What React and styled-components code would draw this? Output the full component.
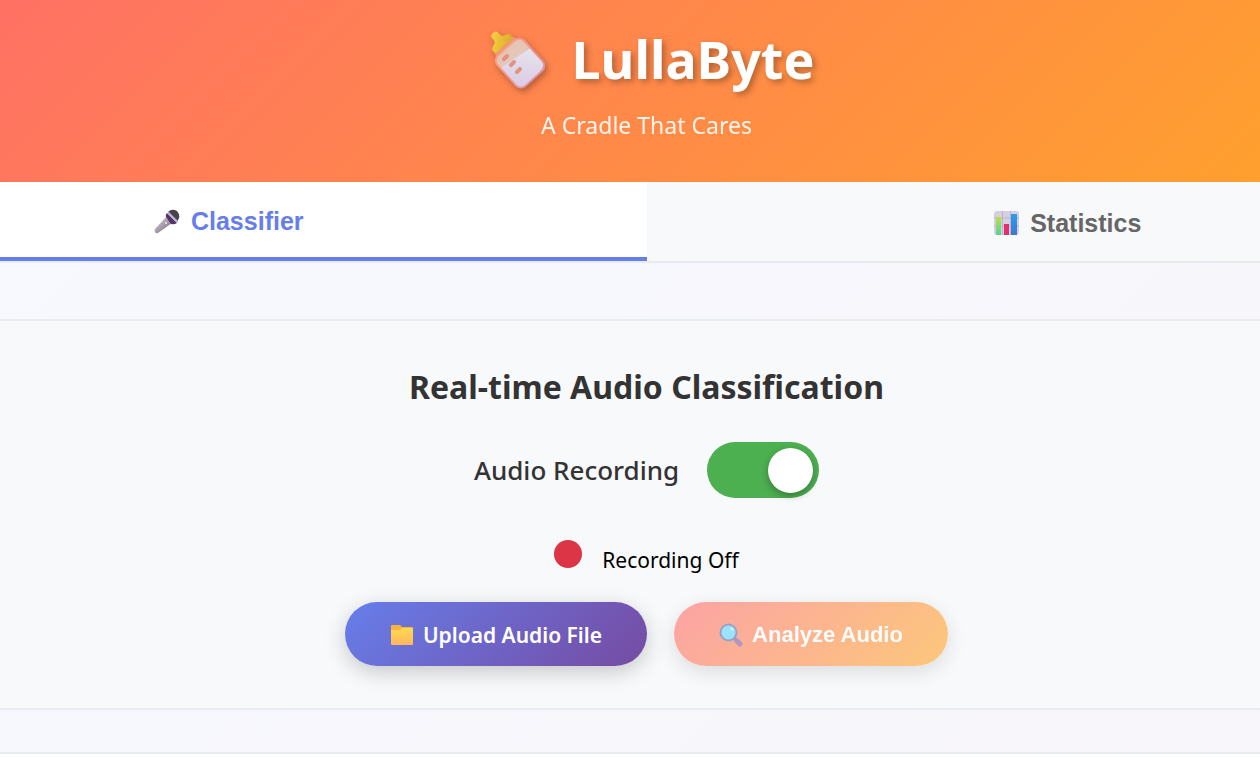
import React, { useState } from "react";
import styled, { createGlobalStyle } from "styled-components";

const GlobalStyle = createGlobalStyle`
  * { box-sizing: border-box; }
  body {
    margin: 0;
    background: #fff;
    color: #000;
    font-family: "Noto Sans", "Open Sans", sans-serif;
  }
`;

const Viewport = styled.div`
  overflow: hidden;
`;

const Page = styled.div`
  margin: 0 -225px 0 -192px;
`;

const Header = styled.header`
  display: flex;
  flex-direction: column;
  align-items: center;
  gap: 10px;
  padding: 23px 0 37px;
  color: #fff;
  background: linear-gradient(135deg, #ff6b6b 0%, #ffa726 100%);
`;

const Brand = styled.h1`
  display: flex;
  align-items: center;
  gap: 27px;
  margin: 0;
  padding-left: 8px;
  font-size: 52px;
  font-weight: 700;
  line-height: 72px;
  text-shadow: 3px 3px 6px rgba(0, 0, 0, 0.3);
`;

const BottleSvg = styled.svg`
  width: 58px;
  height: 60px;
  filter: drop-shadow(2px 3px 3px rgba(0, 0, 0, 0.3));
`;

const Tagline = styled.p`
  margin: 0;
  font-size: 23px;
  line-height: 40px;
  opacity: 0.9;
`;

const Tabs = styled.nav`
  display: flex;
  height: 81px;
  border-bottom: 2px solid #e9ecef;
  background: #f8f9fa;
`;

const Tab = styled.button`
  flex: 1;
  display: flex;
  align-items: center;
  justify-content: center;
  gap: 11px;
  padding: 2px 0 0 3px;
  border: 0;
  border-bottom: ${(p) => (p.$active ? "4px solid #667eea" : "0")};
  background: ${(p) => (p.$active ? "#fff" : "#f8f9fb")};
  color: ${(p) => (p.$active ? "#667eea" : "#666")};
  font: 700 25px/32px "Liberation Sans", sans-serif;
  cursor: pointer;
`;

const Icon = styled.svg`
  flex: none;
  width: ${(p) => p.$size}px;
  height: ${(p) => p.$size}px;
`;

const Content = styled.main`
  padding: 56px 0 42px;
  border-bottom: 2px solid #e9ecef;
  background: linear-gradient(135deg, #f6f9ff 0%, #f8f5fa 100%);
`;

const Panel = styled.section`
  display: flex;
  flex-direction: column;
  align-items: center;
  padding: 42px 0;
  border: solid #e9ecef;
  border-width: 2px 0;
  background: #f8f9fb;
`;

const Title = styled.h2`
  margin: 0 0 31px;
  color: #333;
  font-size: 32px;
  font-weight: 700;
  line-height: 48px;
`;

const ToggleRow = styled.label`
  display: flex;
  align-items: center;
  gap: 28px;
  height: 56px;
  color: #333;
  font-size: 26px;
  font-weight: 500;
  cursor: pointer;
`;

const Switch = styled.input`
  appearance: none;
  display: flex;
  align-items: center;
  justify-content: ${(p) => (p.checked ? "flex-end" : "flex-start")};
  width: 112px;
  height: 56px;
  margin: 0;
  padding: 0 6px;
  border-radius: 28px;
  background: ${(p) => (p.checked ? "#4caf50" : "#ccc")};
  cursor: pointer;

  &::before {
    content: "";
    width: 45px;
    height: 45px;
    border-radius: 50%;
    background: #fff;
    box-shadow: 0 3px 7px rgba(0, 0, 0, 0.3);
  }
`;

const Status = styled.div`
  display: flex;
  align-items: flex-start;
  gap: 20px;
  margin: 42px 0 0;
  height: 62px;
  font-size: 21px;
  line-height: 40px;
`;

const Dot = styled.span`
  width: 28px;
  height: 28px;
  border-radius: 50%;
  background: #dc3545;
`;

const Actions = styled.div`
  display: flex;
  gap: 27px;
`;

const Action = styled.button`
  display: flex;
  align-items: center;
  justify-content: center;
  gap: 9px;
  width: ${(p) => p.$width}px;
  height: 64px;
  padding: 2px 0 0;
  border: 0;
  border-radius: 32px;
  color: #fff;
  background: ${(p) => p.$fill};
  font: ${(p) => p.$font};
  box-shadow: 0 6px 21px rgba(0, 0, 0, 0.2);
  opacity: ${(p) => (p.$dim ? 0.6 : 1)};
  cursor: pointer;
`;

function Bottle() {
  return (
    <BottleSvg viewBox="1 0 58 60" aria-hidden="true">
      <defs>
        <linearGradient id="glass" x1="0" y1="0" x2="0" y2="1">
          <stop offset="0" stopColor="#e6c4b4" />
          <stop offset="1" stopColor="#dfcac8" />
        </linearGradient>
        <linearGradient id="milk" x1="0.6" y1="0" x2="0.4" y2="1">
          <stop offset="0" stopColor="#e6e4ea" />
          <stop offset="1" stopColor="#d9c8e6" />
        </linearGradient>
        <linearGradient id="rim" x1="0.3" y1="0" x2="0.6" y2="1">
          <stop offset="0" stopColor="#f7a17f" />
          <stop offset="1" stopColor="#de91a8" />
        </linearGradient>
        <linearGradient id="teat" x1="0" y1="0" x2="1" y2="1">
          <stop offset="0" stopColor="#ffd94a" />
          <stop offset="1" stopColor="#d9ab28" />
        </linearGradient>
        <clipPath id="body">
          <rect x="-17" y="-18" width="34" height="39" rx="6" transform="translate(33 33) rotate(-42)" />
        </clipPath>
      </defs>
      <g transform="translate(33 33) rotate(-42)">
        <rect x="-13" y="-24" width="26" height="8" rx="3" fill="#ee9670" />
        <path d="M-11-22q-3-5 2-7 5-1 5-5-1-5 4-5t4 5q0 4 5 5 5 2 2 7z" fill="url(#teat)" />
        <rect x="-19" y="-20" width="38" height="43" rx="8" fill="url(#rim)" />
        <rect x="-17" y="-18" width="34" height="39" rx="6" fill="url(#glass)" />
      </g>
      <path clipPath="url(#body)" d="M8 43L46 18L62 30L40 62L14 54z" fill="url(#milk)" />
      <g stroke="#e2927f" strokeWidth="4" strokeLinecap="round">
        <path d="M18 30l3-3M25 36l3-3M31 43l3-3" />
      </g>
    </BottleSvg>
  );
}

function Microphone() {
  return (
    <Icon $size={26} viewBox="0 0 26 26" aria-hidden="true">
      <defs>
        <linearGradient id="handle" x1="0" y1="0" x2="1" y2="1">
          <stop offset="0.2" stopColor="#c9c3cd" />
          <stop offset="0.8" stopColor="#80778a" />
        </linearGradient>
      </defs>
      <path d="M12 9l6 6L4 25q-2 1-3-1t0-3z" fill="url(#handle)" />
      <path d="M12 9q-1-2 1-4l10 10q-3 2-6 1z" fill="#52346b" />
      <path d="M14 4q4-4 9-1 4 5 1 9l-1 2z" fill="#48424d" />
      <path d="M13 5l10 10 1-2L15 4z" fill="#b9b4c2" />
      <circle cx="12" cy="15" r="1" fill="#eee" />
    </Icon>
  );
}

function Chart() {
  return (
    <Icon $size={26} viewBox="0 0 26 26" aria-hidden="true">
      <defs>
        <linearGradient id="green" x1="0" y1="0" x2="0" y2="1">
          <stop stopColor="#b8e04e" /><stop offset="1" stopColor="#55d39a" />
        </linearGradient>
        <linearGradient id="blue" x1="0" y1="0" x2="0" y2="1">
          <stop stopColor="#279fee" /><stop offset="1" stopColor="#3c78cb" />
        </linearGradient>
      </defs>
      <rect x="1" y="1" width="25" height="24" rx="3" fill="#d6cfdf" />
      <path d="M1 8h25M1 16h25M9.500 1v24M17.500 1v24" stroke="#bdb4c8" />
      <path d="M3 7h5v18H3z" fill="url(#green)" />
      <path d="M11 14h5v11h-5z" fill="#e32d6d" />
      <path d="M18 4h6v21h-6z" fill="url(#blue)" />
    </Icon>
  );
}

function Folder() {
  return (
    <Icon $size={24} viewBox="0 0 24 24" aria-hidden="true">
      <defs>
        <linearGradient id="folder" x1="0" y1="0" x2="0" y2="1">
          <stop stopColor="#ffda50" /><stop offset="1" stopColor="#ffb55f" />
        </linearGradient>
      </defs>
      <path d="M1 3q0-1 1-1h8l2 2h10q1 0 1 1v6H1z" fill="#f9b43a" />
      <path d="M1 7h9l2-2h11v16q0 1-1 1H2q-1 0-1-1z" fill="url(#folder)" />
    </Icon>
  );
}

function Magnifier() {
  return (
    <Icon $size={24} viewBox="0 0 24 24" aria-hidden="true">
      <path d="M15 15l2 2" stroke="#4d5b8c" strokeWidth="3" />
      <path d="M17.500 17.500l3.500 3.500" stroke="#7d579f" strokeWidth="5" strokeLinecap="round" />
      <circle cx="9.500" cy="9.500" r="8" fill="#5cd3ff" stroke="#5d6aa0" strokeWidth="2" />
      <circle cx="13" cy="6" r="1.500" fill="#c1f1ff" />
    </Icon>
  );
}

export default function App() {
  const [on, setOn] = useState(true);
  return (
    <Viewport>
      <GlobalStyle />
      <Page>
        <Header>
          <Brand><Bottle />LullaByte</Brand>
          <Tagline>A Cradle That Cares</Tagline>
        </Header>
        <Tabs>
          <Tab $active><Microphone />Classifier</Tab>
          <Tab><Chart />Statistics</Tab>
        </Tabs>
        <Content>
          <Panel>
            <Title>Real-time Audio Classification</Title>
            <ToggleRow htmlFor="recording">
              Audio Recording
              <Switch id="recording" type="checkbox" role="switch" checked={on} onChange={() => setOn(!on)} />
            </ToggleRow>
            <Status><Dot />Recording Off</Status>
            <Actions>
              <Action $width={302} $fill="linear-gradient(135deg, #667eea, #764ba2)" $font='600 21px/32px "Noto Sans", "Open Sans", sans-serif'>
                <Folder />Upload Audio File
              </Action>
              <Action $dim $width={274} $fill="linear-gradient(135deg, #ff6b6b, #ffa726)" $font='700 22px/32px "Liberation Sans", sans-serif'>
                <Magnifier />Analyze Audio
              </Action>
            </Actions>
          </Panel>
        </Content>
      </Page>
    </Viewport>
  );
}
